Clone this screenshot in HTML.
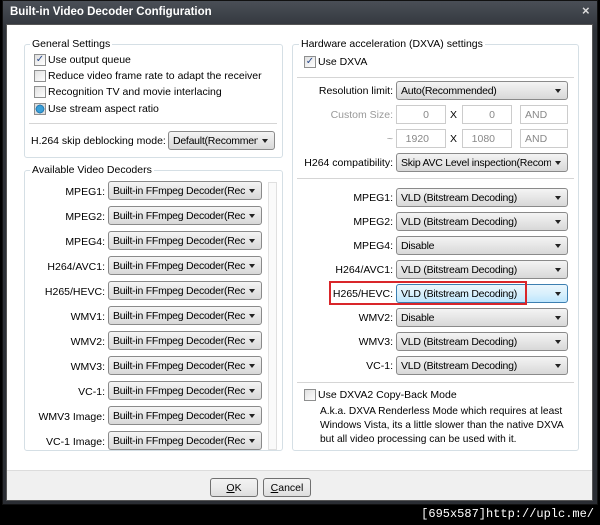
<!DOCTYPE html>
<html><head><meta charset="utf-8"><style>
*{box-sizing:border-box;margin:0;padding:0}
body{width:600px;height:525px;background:#000;position:relative;overflow:hidden;font-family:"Liberation Sans",sans-serif;font-size:10.5px;color:#000}
.a{position:absolute}
#win{left:2px;top:0;width:596px;height:505px;background:linear-gradient(#4a4f57,#2e3238 30px,#2a2d33);border:1px solid #111}
#title{left:10px;top:6px;color:#fff;font-weight:bold;font-size:11.5px}
#client{left:6px;top:24px;width:587px;height:477px;background:#fff;border:1px solid #555}
#bar{left:7px;top:470px;width:585px;height:30px;background:#f0f0f0;border-top:1px solid #dcdcdc}
.grp{position:absolute;border:1px solid #d5dfe5;border-radius:3px}
.gt{position:absolute;background:#fff;padding:0 2px}
.cb{position:absolute;width:12px;height:12px;border:1px solid #8e8f8f;background:linear-gradient(135deg,#e0e0e0,#fff)}
.lbl{position:absolute;white-space:nowrap}
.r{text-align:right}
.combo{position:absolute;height:19px;border:1px solid #8a8a8a;border-radius:3px;background:linear-gradient(#f4f4f4,#e6e6e6 50%,#d8d8d8);padding:3px 4px 0}
.combo span{display:block;white-space:nowrap;overflow:hidden;width:calc(100% - 12px);letter-spacing:-0.25px}
.combo:after{content:"";position:absolute;right:6px;top:7px;border-left:3.5px solid transparent;border-right:3.5px solid transparent;border-top:4px solid #222}
.sep{position:absolute;height:1px;background:#d5d5d5}
.dis{color:#999}
.box{position:absolute;height:19px;border:1px solid #ccc;background:#fff;color:#888;text-align:right;padding:3px 16px 0 0}
.btn{position:absolute;height:19px;border:1px solid #707070;border-radius:3px;background:linear-gradient(#f2f2f2,#ebebeb 50%,#dddddd);text-align:center;padding-top:3px}
</style></head><body>
<div id="win" class="a"></div>
<div id="title" class="a">Built-in Video Decoder Configuration</div>
<div class="a" style="left:582px;top:3px;color:#ddd;font-weight:bold;font-size:13px">×</div>
<div id="client" class="a"></div>
<div id="bar" class="a"></div>

<div class="grp" style="left:24px;top:44px;width:259px;height:114px"></div>
<div class="gt" style="left:30px;top:38px">General Settings</div>
<div class="cb" style="left:34px;top:54px;font-size:10px;line-height:10px;color:#2a4a8a;text-align:center">✓</div>
<div class="lbl" style="left:48px;top:54px">Use output queue</div>
<div class="cb" style="left:34px;top:70px"></div>
<div class="lbl" style="left:48px;top:70px">Reduce video frame rate to adapt the receiver</div>
<div class="cb" style="left:34px;top:86px"></div>
<div class="lbl" style="left:48px;top:86px">Recognition TV and movie interlacing</div>
<div class="cb" style="left:34px;top:103px;background:radial-gradient(#3aa0d8 40%,#1e6fa8 60%,#ddd 62%)"></div>
<div class="lbl" style="left:48px;top:103px">Use stream aspect ratio</div>
<div class="sep" style="left:29px;top:123px;width:248px"></div>
<div class="lbl" style="left:31px;top:135px">H.264 skip deblocking mode:</div>
<div class="combo" style="left:168px;top:131px;width:107px"><span>Default(Recommen</span></div>

<div class="grp" style="left:24px;top:170px;width:259px;height:281px"></div>
<div class="gt" style="left:30px;top:164px">Available Video Decoders</div>
<div class="a" style="left:268px;top:182px;width:9px;height:268px;border:1px solid #e0e0e0;background:#fafafa"></div>
<div class="lbl r" style="left:20px;width:85px;top:186px">MPEG1:</div><div class="combo" style="left:108px;top:181px;width:154px"><span>Built-in FFmpeg Decoder(Rec</span></div>
<div class="lbl r" style="left:20px;width:85px;top:211px">MPEG2:</div><div class="combo" style="left:108px;top:206px;width:154px"><span>Built-in FFmpeg Decoder(Rec</span></div>
<div class="lbl r" style="left:20px;width:85px;top:236px">MPEG4:</div><div class="combo" style="left:108px;top:231px;width:154px"><span>Built-in FFmpeg Decoder(Rec</span></div>
<div class="lbl r" style="left:20px;width:85px;top:261px">H264/AVC1:</div><div class="combo" style="left:108px;top:256px;width:154px"><span>Built-in FFmpeg Decoder(Rec</span></div>
<div class="lbl r" style="left:20px;width:85px;top:286px">H265/HEVC:</div><div class="combo" style="left:108px;top:281px;width:154px"><span>Built-in FFmpeg Decoder(Rec</span></div>
<div class="lbl r" style="left:20px;width:85px;top:311px">WMV1:</div><div class="combo" style="left:108px;top:306px;width:154px"><span>Built-in FFmpeg Decoder(Rec</span></div>
<div class="lbl r" style="left:20px;width:85px;top:336px">WMV2:</div><div class="combo" style="left:108px;top:331px;width:154px"><span>Built-in FFmpeg Decoder(Rec</span></div>
<div class="lbl r" style="left:20px;width:85px;top:361px">WMV3:</div><div class="combo" style="left:108px;top:356px;width:154px"><span>Built-in FFmpeg Decoder(Rec</span></div>
<div class="lbl r" style="left:20px;width:85px;top:386px">VC-1:</div><div class="combo" style="left:108px;top:381px;width:154px"><span>Built-in FFmpeg Decoder(Rec</span></div>
<div class="lbl r" style="left:10px;width:95px;top:411px">WMV3 Image:</div><div class="combo" style="left:108px;top:406px;width:154px"><span>Built-in FFmpeg Decoder(Rec</span></div>
<div class="a" style="left:25px;top:430px;width:240px;height:20px;overflow:hidden">
<div class="lbl r" style="left:-15px;width:95px;top:6px">VC-1 Image:</div><div class="combo" style="left:83px;top:1px;width:154px"><span>Built-in FFmpeg Decoder(Rec</span></div></div>

<div class="grp" style="left:292px;top:44px;width:287px;height:407px"></div>
<div class="gt" style="left:299px;top:38px">Hardware acceleration (DXVA) settings</div>
<div class="cb" style="left:304px;top:56px;font-size:10px;line-height:10px;color:#2a4a8a;text-align:center">✓</div>
<div class="lbl" style="left:318px;top:56px">Use DXVA</div>
<div class="sep" style="left:297px;top:77px;width:277px"></div>
<div class="lbl r" style="left:290px;width:103px;top:85px">Resolution limit:</div>
<div class="combo" style="left:396px;top:81px;width:172px"><span>Auto(Recommended)</span></div>
<div class="lbl r dis" style="left:290px;width:103px;top:109px">Custom Size:</div>
<div class="box" style="left:396px;top:105px;width:50px">0</div>
<div class="lbl" style="left:450px;top:109px">X</div>
<div class="box" style="left:462px;top:105px;width:50px">0</div>
<div class="box" style="left:520px;top:105px;width:48px;text-align:left;padding-left:4px">AND</div>
<div class="lbl r dis" style="left:290px;width:103px;top:133px">~</div>
<div class="box" style="left:396px;top:129px;width:50px">1920</div>
<div class="lbl" style="left:450px;top:133px">X</div>
<div class="box" style="left:462px;top:129px;width:50px">1080</div>
<div class="box" style="left:520px;top:129px;width:48px;text-align:left;padding-left:4px">AND</div>
<div class="lbl r" style="left:290px;width:103px;top:157px">H264 compatibility:</div>
<div class="combo" style="left:396px;top:153px;width:172px"><span>Skip AVC Level inspection(Recom</span></div>
<div class="sep" style="left:297px;top:178px;width:277px"></div>
<div class="lbl r" style="left:290px;width:103px;top:192px">MPEG1:</div><div class="combo" style="left:396px;top:188px;width:172px"><span>VLD (Bitstream Decoding)</span></div>
<div class="lbl r" style="left:290px;width:103px;top:216px">MPEG2:</div><div class="combo" style="left:396px;top:212px;width:172px"><span>VLD (Bitstream Decoding)</span></div>
<div class="lbl r" style="left:290px;width:103px;top:240px">MPEG4:</div><div class="combo" style="left:396px;top:236px;width:172px"><span>Disable</span></div>
<div class="lbl r" style="left:290px;width:103px;top:264px">H264/AVC1:</div><div class="combo" style="left:396px;top:260px;width:172px"><span>VLD (Bitstream Decoding)</span></div>
<div class="lbl r" style="left:290px;width:103px;top:288px">H265/HEVC:</div><div class="combo" style="left:396px;top:284px;width:172px;background:linear-gradient(#eaf6fd,#d9f0fc 50%,#bee6fd);border-color:#3c7fb1"><span>VLD (Bitstream Decoding)</span></div>
<div class="a" style="left:329px;top:281px;width:198px;height:24px;border:2px solid #d9262a"></div>
<div class="lbl r" style="left:290px;width:103px;top:312px">WMV2:</div><div class="combo" style="left:396px;top:308px;width:172px"><span>Disable</span></div>
<div class="lbl r" style="left:290px;width:103px;top:336px">WMV3:</div><div class="combo" style="left:396px;top:332px;width:172px"><span>VLD (Bitstream Decoding)</span></div>
<div class="lbl r" style="left:290px;width:103px;top:360px">VC-1:</div><div class="combo" style="left:396px;top:356px;width:172px"><span>VLD (Bitstream Decoding)</span></div>
<div class="sep" style="left:297px;top:382px;width:277px"></div>
<div class="cb" style="left:304px;top:389px"></div>
<div class="lbl" style="left:318px;top:389px">Use DXVA2 Copy-Back Mode</div>
<div class="lbl" style="left:320px;top:405px;line-height:14px;font-size:10.2px">A.k.a. DXVA Renderless Mode which requires at least<br>Windows Vista, its a little slower than the native DXVA<br>but all video processing can be used with it.</div>

<div class="btn" style="left:210px;top:478px;width:48px"><u>O</u>K</div>
<div class="btn" style="left:263px;top:478px;width:48px"><u>C</u>ancel</div>

<div class="a" style="right:6px;top:507px;color:#fff;font-family:'Liberation Mono',monospace;font-size:12px">[695x587]http://uplc.me/</div>
</body></html>
